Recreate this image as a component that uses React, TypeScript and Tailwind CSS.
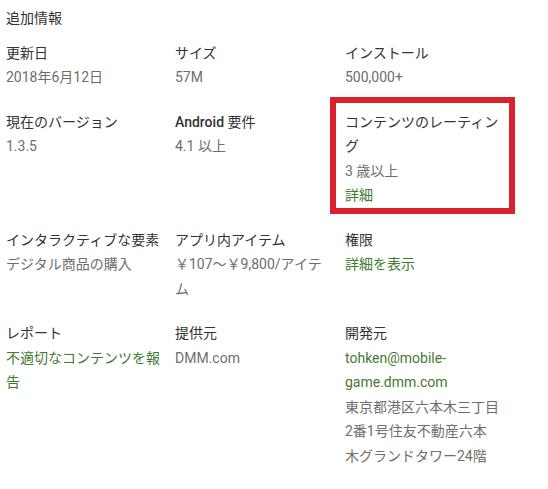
import React from "react";

type Cell = {
  label: React.ReactNode;
  values: { text: string; green?: boolean }[];
  boxed?: boolean;
};

const rows: Cell[][] = [
  [
    { label: "更新日", values: [{ text: "2018年6月12日" }] },
    { label: "サイズ", values: [{ text: "57M" }] },
    { label: "インストール", values: [{ text: "500,000+" }] },
  ],
  [
    { label: "現在のバージョン", values: [{ text: "1.3.5" }] },
    {
      label: (
        <>
          <span className="font-medium">Android</span> 要件
        </>
      ),
      values: [{ text: "4.1 以上" }],
    },
    {
      label: "コンテンツのレーティング",
      values: [{ text: "3 歳以上" }, { text: "詳細", green: true }],
      boxed: true,
    },
  ],
  [
    { label: "インタラクティブな要素", values: [{ text: "デジタル商品の購入" }] },
    { label: "アプリ内アイテム", values: [{ text: "￥107～￥9,800/アイテム" }] },
    { label: "権限", values: [{ text: "詳細を表示", green: true }] },
  ],
  [
    { label: "レポート", values: [{ text: "不適切なコンテンツを報告", green: true }] },
    { label: "提供元", values: [{ text: "DMM.com" }] },
    {
      label: "開発元",
      values: [
        { text: "tohken@mobile-game.dmm.com", green: true },
        { text: "東京都港区六本木三丁目2番1号住友不動産六本木グランドタワー24階" },
      ],
    },
  ],
];

export default function App() {
  return (
    <div
      className="w-[548px] h-[489px] bg-white pl-[6px] pt-[6px] text-[14px] leading-[24.5px] overflow-hidden"
      style={{ fontFamily: 'Roboto, "Noto Sans CJK JP", sans-serif' }}
    >
      <div className="text-[#333333] mb-[10px]">追加情報</div>
      <div className="flex flex-col gap-[20px]">
        {rows.map((row, i) => (
          <div key={i} className="grid grid-cols-[169px_170px_169px]">
            {row.map((c, j) => (
              <div key={j} className="relative pr-[14px]">
                {c.boxed && (
                  <div className="absolute top-[-13px] bottom-[-6px] left-[-15px] right-[-1px] border-[6px] border-[#d9222d] pointer-events-none" />
                )}
                <div className="text-[#333333]">{c.label}</div>
                {c.values.map((v, k) => (
                  <div
                    key={k}
                    className={v.green ? "text-[#437a30]" : "text-[#6e6e6e]"}
                  >
                    {v.text}
                  </div>
                ))}
              </div>
            ))}
          </div>
        ))}
      </div>
    </div>
  );
}
